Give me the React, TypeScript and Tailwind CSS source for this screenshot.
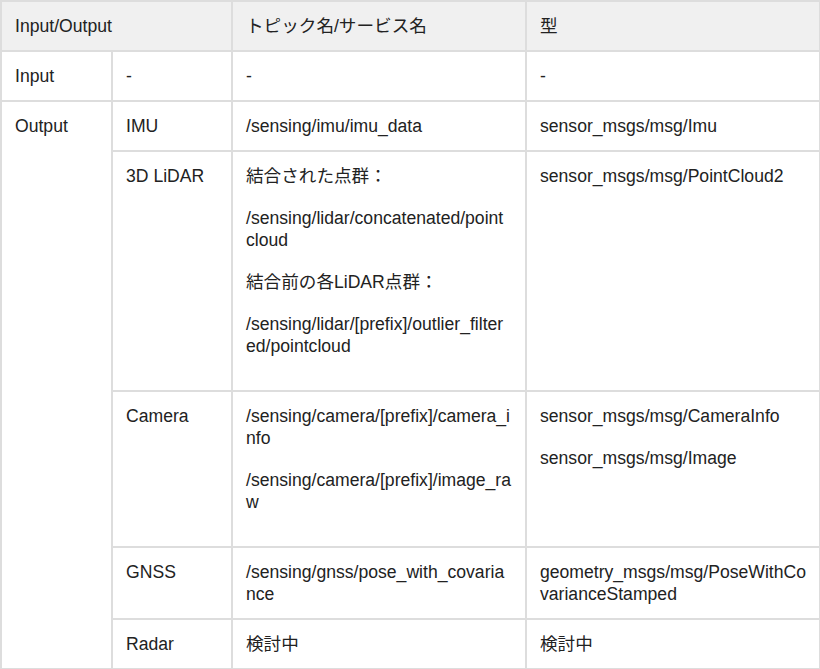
import React from "react";

const td = "border-2 border-[#dddddd] align-top px-[13px] pt-[13px] pb-[13px] leading-[22px] [word-break:break-all]";

export default function App() {
  return (
    <div className="bg-white w-[820px] h-[669px] text-[#222222] text-[17.6px]" style={{ fontFamily: '"Liberation Sans", "Noto Sans CJK JP", sans-serif' }}>
      <table className="border-collapse table-fixed w-[819px]">
        <colgroup>
          <col className="w-[111px]" />
          <col className="w-[120px]" />
          <col className="w-[294px]" />
          <col className="w-[294px]" />
        </colgroup>
        <thead>
          <tr className="bg-[#f0f0f0]">
            <th colSpan={2} className={td + " text-left font-normal"}>Input/Output</th>
            <th className={td + " text-left font-normal"}>トピック名/サービス名</th>
            <th className={td + " text-left font-normal"}>型</th>
          </tr>
        </thead>
        <tbody>
          <tr>
            <td className={td}>Input</td>
            <td className={td}>-</td>
            <td className={td}>-</td>
            <td className={td}>-</td>
          </tr>
          <tr>
            <td rowSpan={5} className={td}>Output</td>
            <td className={td}>IMU</td>
            <td className={td}>/sensing/imu/imu_data</td>
            <td className={td}>sensor_msgs/msg/Imu</td>
          </tr>
          <tr>
            <td className={td}>3D LiDAR</td>
            <td className={td}>
              <p className="mb-5">結合された点群：</p>
              <p className="mb-5">/sensing/lidar/concatenated/pointcloud</p>
              <p className="mb-5">結合前の各LiDAR点群：</p>
              <p className="mb-5">/sensing/lidar/[prefix]/outlier_filtered/pointcloud</p>
            </td>
            <td className={td}>sensor_msgs/msg/PointCloud2</td>
          </tr>
          <tr>
            <td className={td}>Camera</td>
            <td className={td}>
              <p className="mb-5">/sensing/camera/[prefix]/camera_info</p>
              <p className="mb-5">/sensing/camera/[prefix]/image_raw</p>
            </td>
            <td className={td}>
              <p className="mb-5">sensor_msgs/msg/CameraInfo</p>
              <p className="mb-5">sensor_msgs/msg/Image</p>
            </td>
          </tr>
          <tr>
            <td className={td}>GNSS</td>
            <td className={td}>/sensing/gnss/pose_with_covariance</td>
            <td className={td}>geometry_msgs/msg/PoseWithCovarianceStamped</td>
          </tr>
          <tr>
            <td className={td}>Radar</td>
            <td className={td}>検討中</td>
            <td className={td}>検討中</td>
          </tr>
        </tbody>
      </table>
    </div>
  );
}
